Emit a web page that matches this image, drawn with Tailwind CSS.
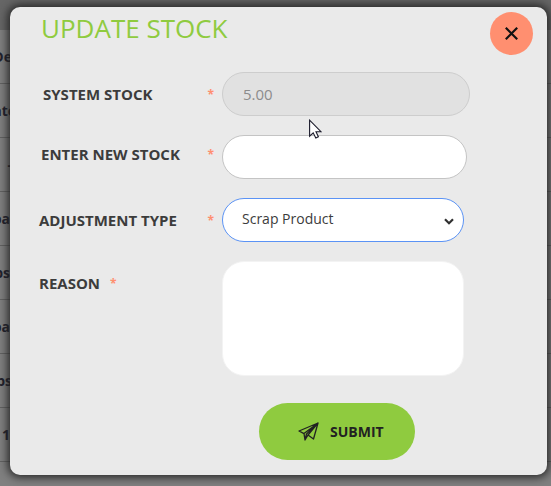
<!DOCTYPE html>
<html lang="en">
<head>
<meta charset="utf-8">
<meta name="viewport" content="width=device-width, initial-scale=1">
<title>Update Stock</title>
<script src="https://cdn.jsdelivr.net/npm/@tailwindcss/browser@4"></script>
</head>
<body class="relative min-h-screen overflow-hidden bg-[#808080] font-['Open_Sans','Noto_Sans',sans-serif] text-[15px] text-[#3c3c3c]">
  <!-- Dimmed stock list behind the dialog -->
  <div class="absolute inset-0 overflow-hidden text-sm font-bold text-[#20202c]" aria-hidden="true">
    <div class="h-[30px] bg-[#666666]"></div>
    <div class="flex h-[54px] items-center border-b border-[#626262]"><span class="flex w-3 justify-end">De</span></div>
    <div class="flex h-[54px] items-center border-b border-[#626262]"><span class="flex w-4 justify-end">ate</span></div>
    <div class="flex h-[54px] items-center border-b border-[#626262]"><span class="flex w-3 justify-end">-</span></div>
    <div class="flex h-[54px] items-center border-b border-[#626262]"><span class="flex w-2.5 justify-end">pa</span></div>
    <div class="flex h-[54px] items-center border-b border-[#626262]"><span class="flex w-2.5 justify-end">bs</span></div>
    <div class="flex h-[54px] items-center border-b border-[#626262]"><span class="flex w-2.5 justify-end">pa</span></div>
    <div class="flex h-[54px] items-center border-b border-[#626262]"><span class="flex w-3 justify-end">bs</span></div>
    <div class="flex h-[54px] items-center border-b border-[#626262]"><span class="flex w-2.5 justify-end">1</span></div>
  </div>

  <div role="dialog" aria-labelledby="title" class="relative mt-[7px] mr-1 ml-2.5 rounded-[10px] bg-[#eaeaea] pb-[15px] shadow-[0_0_10px_2px_#202020]">
    <header class="flex h-[65px] items-start justify-between pr-[14px] pl-[31px]">
      <h1 id="title" class="pt-[3px] text-[26px] leading-9 text-[#8fcb3f]">UPDATE STOCK</h1>
      <button type="button" aria-label="Close" class="mt-[5px] flex size-[43px] items-center justify-center rounded-full bg-[#ff8f70]">
        <svg class="size-[13px]" viewBox="0 0 13 13" fill="none" stroke="#111" stroke-width="2.2"><path d="M.8.8l11.4 11.4M12.2.8L.8 12.2"/></svg>
      </button>
    </header>

    <form class="flex flex-col gap-[19px]">
      <div class="flex items-center">
        <label for="system" class="flex w-[212px] justify-between pt-0.5 pr-2 pl-[33px] font-bold">SYSTEM STOCK <span class="text-xs leading-6 text-[#ff8f70]">*</span></label>
        <input id="system" value="5.00" disabled class="h-[44px] w-[248px] rounded-full border border-[#cdcdcd] bg-[#e1e1e1] px-5 text-[15px] text-[#8c8c8c]">
      </div>
      <div class="flex items-center">
        <label for="new" class="flex w-[212px] justify-between pr-2 pb-1 pl-[31px] font-bold">ENTER NEW STOCK <span class="text-xs leading-6 text-[#ff8f70]">*</span></label>
        <input id="new" class="h-[44px] w-[245px] rounded-full border border-[#c4c4c4] bg-white px-5">
      </div>
      <div class="flex items-center">
        <label for="type" class="flex w-[212px] justify-between pt-0.5 pr-2 pl-[29px] font-bold">ADJUSTMENT TYPE <span class="text-xs leading-6 text-[#ff8f70]">*</span></label>
        <div class="relative w-[242px]">
          <select id="type" class="h-[44px] w-full appearance-none rounded-full border border-[#5b93f5] bg-white px-[19px] pb-0.5 text-sm text-[#3c3c3c]"><option>Scrap Product</option></select>
          <svg class="pointer-events-none absolute top-5 right-2.5 h-[7px] w-[10px]" viewBox="0 0 10 7" fill="none" stroke="#303030" stroke-width="2.2"><path d="M1 1.2l4 4 4-4"/></svg>
        </div>
      </div>
      <div class="flex items-start">
        <label for="reason" class="flex w-[212px] gap-2.5 pt-[11px] pl-[29px] font-bold">REASON <span class="text-xs leading-6 text-[#ff8f70]">*</span></label>
        <textarea id="reason" class="h-[115px] w-[242px] resize-none rounded-[22px] border border-[#f3f3f3] bg-white px-5 py-3"></textarea>
      </div>
      <button type="submit" class="mt-2 ml-[249px] flex h-[57px] w-[156px] items-center gap-[11px] rounded-full bg-[#8fcb3f] pl-[39px] text-sm font-bold text-[#222]">
        <svg class="h-[19px] w-[21px]" viewBox="0 0 21 19" fill="none" stroke="#222" stroke-width="1.3" stroke-linejoin="round"><path d="M20 1L1 9l5 2.6L20 1l-4.500 16-5.500-4L20 1M6 11.600L7 18l3-5M7 18L8.500 12 20 1"/></svg>
        SUBMIT
      </button>
    </form>
  </div>

  <!-- Mouse pointer -->
  <svg class="pointer-events-none absolute top-[119px] left-[309px] h-5 w-[13px]" viewBox="0 0 13 20" fill="#fff" stroke="#1a1a2a" stroke-width="1.100"><path d="M.6 1.200v16l3.600-3.400 2.600 5.200 2.600-1.300-2.400-5h5z"/></svg>
</body>
</html>
